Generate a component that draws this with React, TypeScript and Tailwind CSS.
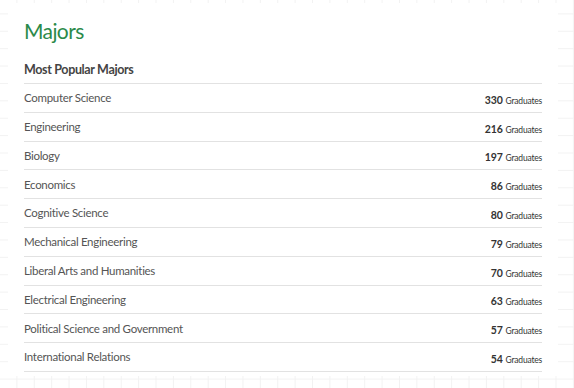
const majors = [
  { name: 'Computer Science', count: 330 },
  { name: 'Engineering', count: 216 },
  { name: 'Biology', count: 197 },
  { name: 'Economics', count: 86 },
  { name: 'Cognitive Science', count: 80 },
  { name: 'Mechanical Engineering', count: 79 },
  { name: 'Liberal Arts and Humanities', count: 70 },
  { name: 'Electrical Engineering', count: 63 },
  { name: 'Political Science and Government', count: 57 },
  { name: 'International Relations', count: 54 },
]

export default function App() {
  return (
    <div className="w-[574px] h-[388px] overflow-hidden bg-white bg-[linear-gradient(to_right,#f2f2f2_1px,transparent_1px),linear-gradient(to_bottom,#f2f2f2_1px,transparent_1px)] bg-[size:17.4px_17.4px] bg-[position:-1px_-4px] pt-[3px] pl-2 font-['Lato',sans-serif]">
      <div className="w-[550px] h-[373px] bg-white px-4 pt-[14px]">
        <h2 className="text-[21px] leading-[28px] tracking-[-0.6px] text-[#2b8a4a]">Majors</h2>
        <h3 className="mt-[16px] text-[12.5px] font-bold leading-[18px] tracking-[-0.35px] text-[#444]">Most Popular Majors</h3>
        <ul className="mt-[4px] border-t border-[#e2e2e2]">
          {majors.map((m) => (
            <li key={m.name} className="flex h-[28.8px] items-center justify-between border-b border-[#e2e2e2]">
              <span className="text-[11.5px] tracking-[-0.3px] text-[#555]">{m.name}</span>
              <span className="text-[#333] tracking-[-0.2px]">
                <span className="text-[10.5px] font-bold">{m.count}</span>
                <span className="text-[8.5px] ml-[3px]">Graduates</span>
              </span>
            </li>
          ))}
        </ul>
      </div>
    </div>
  )
}
